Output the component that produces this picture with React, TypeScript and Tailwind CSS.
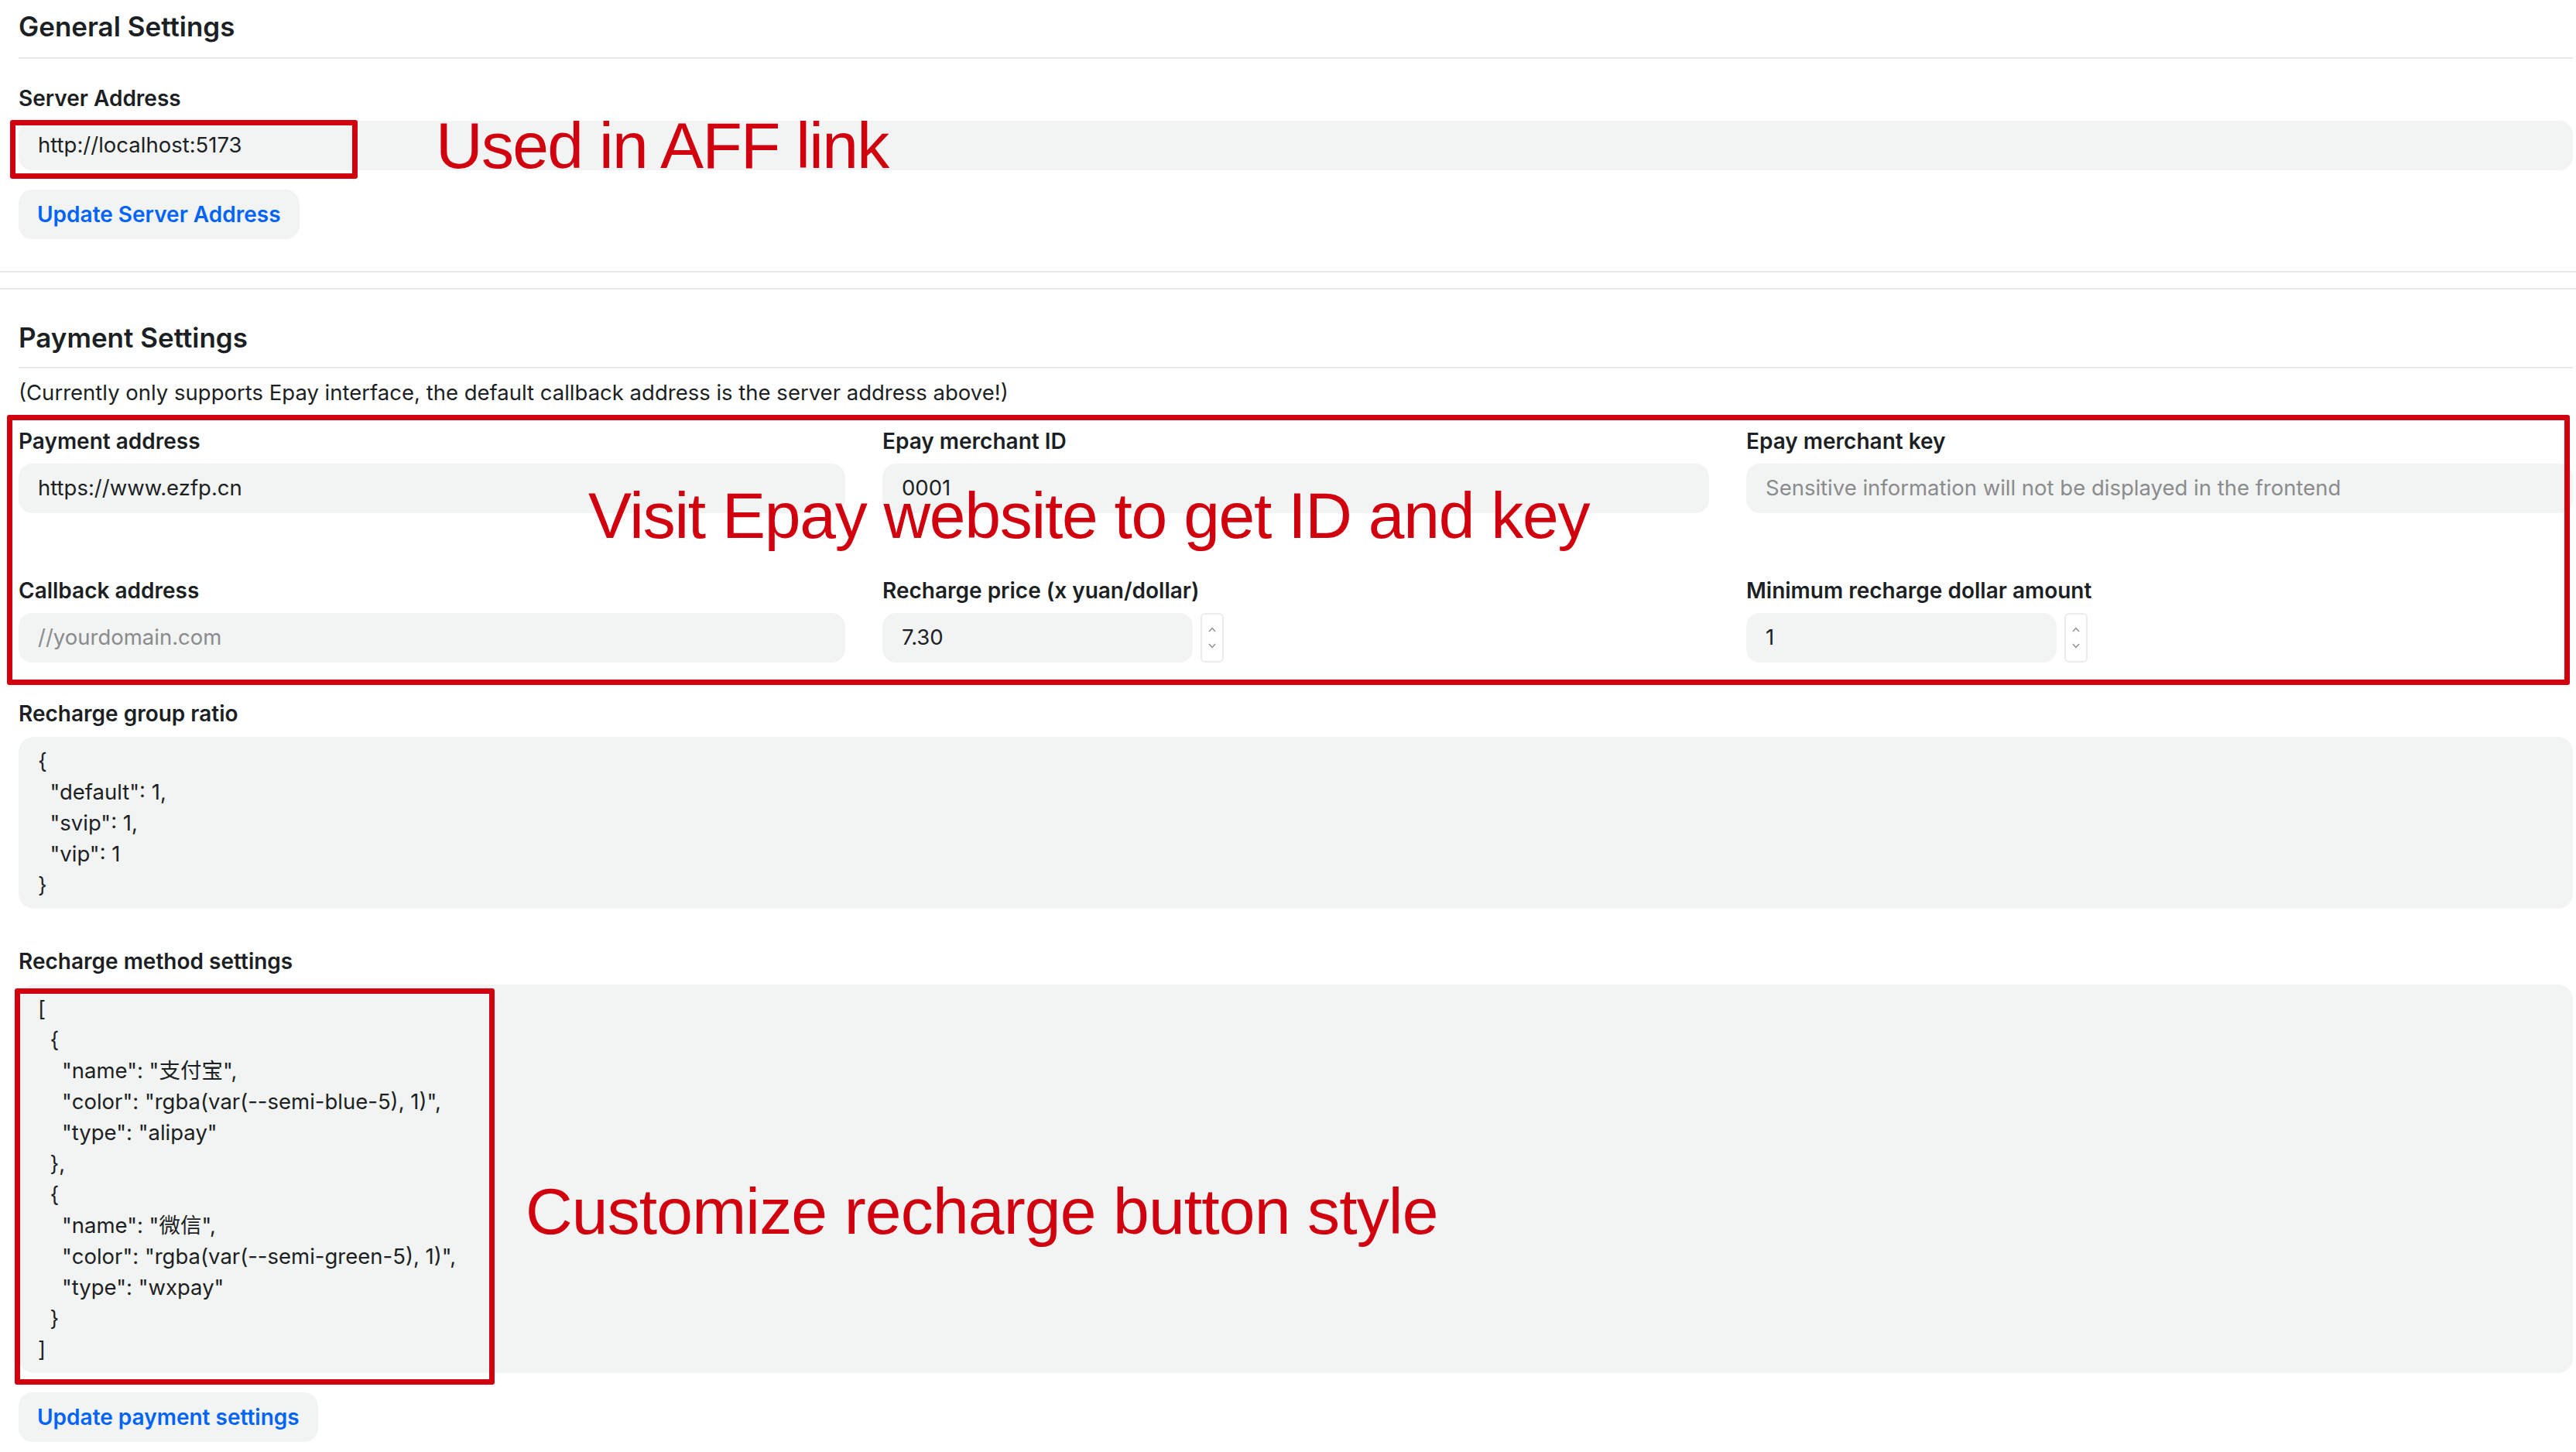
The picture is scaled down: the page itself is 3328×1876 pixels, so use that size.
import React from 'react';

const groupRatio = `{
  "default": 1,
  "svip": 1,
  "vip": 1
}`;

const payMethods = `[
  {
    "name": "支付宝",
    "color": "rgba(var(--semi-blue-5), 1)",
    "type": "alipay"
  },
  {
    "name": "微信",
    "color": "rgba(var(--semi-green-5), 1)",
    "type": "wxpay"
  }
]`;

function Label({ children }: { children: React.ReactNode }) {
  return <div className="text-[28px] leading-[40px] font-semibold">{children}</div>;
}

function TextInput({ value, placeholder }: { value?: string; placeholder?: string }) {
  return (
    <div className="h-[64px] w-full rounded-[18px] bg-[#f2f3f3] px-[25px] flex items-center text-[27.5px]">
      {value ? (
        <span>{value}</span>
      ) : (
        <span className="text-[#8a8b8d]">{placeholder}</span>
      )}
    </div>
  );
}

function Spinner() {
  return (
    <div className="w-[30px] h-[64px] border-2 border-[#ebebeb] rounded-[6px] flex flex-col items-center justify-between py-[16px]">
      <svg width="10" height="7" viewBox="0 0 10 7" fill="none">
        <path d="M1 6 L5 1.5 L9 6" stroke="#8d8e90" strokeWidth="1.4" />
      </svg>
      <svg width="10" height="7" viewBox="0 0 10 7" fill="none">
        <path d="M1 1 L5 5.5 L9 1" stroke="#8d8e90" strokeWidth="1.4" />
      </svg>
    </div>
  );
}

function NumberInput({ value }: { value: string }) {
  return (
    <div className="flex items-center gap-[10px]">
      <div className="w-[401px]">
        <TextInput value={value} />
      </div>
      <Spinner />
    </div>
  );
}

function Field({ label, children }: { label: string; children: React.ReactNode }) {
  return (
    <div className="flex flex-col gap-[9px]">
      <Label>{label}</Label>
      {children}
    </div>
  );
}

function ActionButton({ children }: { children: React.ReactNode }) {
  return (
    <button className="h-[64px] px-[24px] rounded-[18px] bg-[#f2f3f3] text-[#0064fa] text-[28px] font-semibold">
      {children}
    </button>
  );
}

export default function App() {
  return (
    <div className="relative w-[3328px] min-h-[1876px] bg-white text-[#1c1f23] font-['Inter','Noto_Sans_CJK_SC',sans-serif]">
      {/* General settings */}
      <div className="pl-[24px] pr-[4px]">
        <div className="pt-[10px] pb-[16px] border-b-2 border-[#e9e9ea] text-[35px] leading-[48px] font-semibold">
          General Settings
        </div>
        <div className="mt-[31px]">
          <Field label="Server Address">
            <TextInput value="http://localhost:5173" />
          </Field>
        </div>
        <div className="mt-[25px]">
          <ActionButton>Update Server Address</ActionButton>
        </div>
      </div>

      <div className="mt-[41px] h-[2px] bg-[#e9e9ea]" />
      <div className="mt-[20px] h-[2px] bg-[#e9e9ea]" />

      {/* Payment settings */}
      <div className="pl-[24px] pr-[4px]">
        <div className="mt-[38px] pb-[14px] border-b-2 border-[#e9e9ea] text-[35px] leading-[48px] font-semibold">
          Payment Settings
        </div>
        <div className="mt-[11px] text-[27.5px] leading-[40px]">
          (Currently only supports Epay interface, the default callback address is the server address above!)
        </div>

        <div className="mt-[23px] grid grid-cols-3 gap-x-[48px] gap-y-[80px]">
          <Field label="Payment address">
            <TextInput value="https://www.ezfp.cn" />
          </Field>
          <Field label="Epay merchant ID">
            <TextInput value="0001" />
          </Field>
          <Field label="Epay merchant key">
            <TextInput placeholder="Sensitive information will not be displayed in the frontend" />
          </Field>
          <Field label="Callback address">
            <TextInput placeholder="//yourdomain.com" />
          </Field>
          <Field label="Recharge price (x yuan/dollar)">
            <NumberInput value="7.30" />
          </Field>
          <Field label="Minimum recharge dollar amount">
            <NumberInput value="1" />
          </Field>
        </div>

        <div className="mt-[46px] flex flex-col gap-[10px]">
          <Label>Recharge group ratio</Label>
          <div className="rounded-[20px] bg-[#f2f3f3] px-[25px] py-[11px] text-[27.5px] leading-[40px] whitespace-pre">
            {groupRatio}
          </div>
        </div>

        <div className="mt-[48px] flex flex-col gap-[10px]">
          <Label>Recharge method settings</Label>
          <div className="rounded-[20px] bg-[#f2f3f3] px-[25px] py-[11px] text-[27.5px] leading-[40px] whitespace-pre">
            {payMethods}
          </div>
        </div>

        <div className="mt-[25px]">
          <ActionButton>Update payment settings</ActionButton>
        </div>
      </div>

      {/* annotations */}
      <div className="absolute left-[13px] top-[155px] w-[449px] h-[76px] border-[7px] border-[#d1000f] rounded-[3px]" />
      <div className="absolute left-[9px] top-[536px] w-[3311px] h-[349px] border-[7px] border-[#d1000f] rounded-[3px]" />
      <div className="absolute left-[19px] top-[1277px] w-[620px] h-[512px] border-[7px] border-[#d1000f] rounded-[3px]" />

      <div className="absolute left-[563px] top-[146px] text-[84px] leading-none tracking-[-0.02em] text-[#d1000f] font-['Liberation_Sans',Arial,sans-serif] whitespace-nowrap">
        Used in AFF link
      </div>
      <div className="absolute left-[760px] top-[624px] text-[84px] leading-none tracking-[-0.015em] text-[#d1000f] font-['Liberation_Sans',Arial,sans-serif] whitespace-nowrap">
        Visit Epay website to get ID and key
      </div>
      <div className="absolute left-[679px] top-[1523px] text-[84px] leading-none tracking-[-0.01em] text-[#d1000f] font-['Liberation_Sans',Arial,sans-serif] whitespace-nowrap">
        Customize recharge button style
      </div>
    </div>
  );
}
